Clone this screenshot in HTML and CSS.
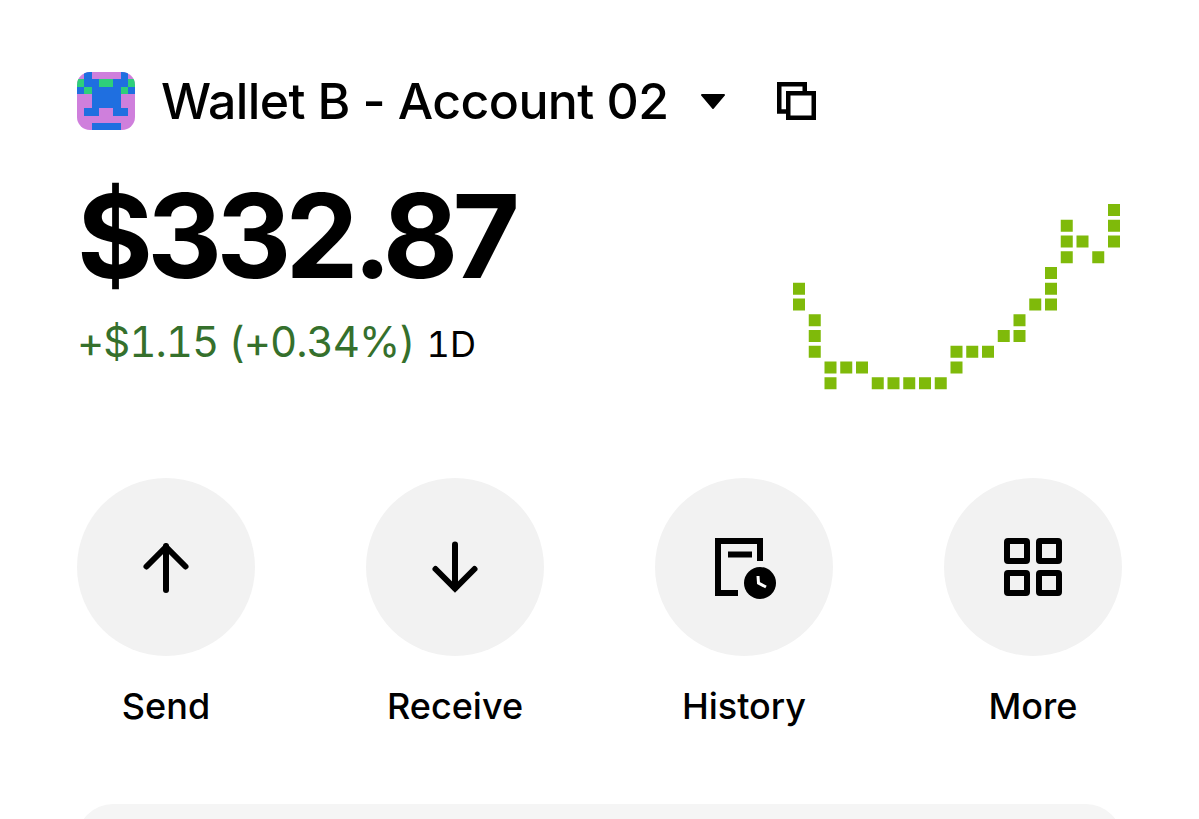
FILE: index.html
```html
<!DOCTYPE html>
<html lang="en">
<head>
    <meta charset="UTF-8">
    <meta name="viewport" content="width=device-width, initial-scale=1.0">
    <title>Wallet</title>
    <link rel="stylesheet" href="styles.css">
</head>
<body>
    <div class="container">
        <div class="account">
            <svg class="avatar" viewBox="0 0 8 8" shape-rendering="crispEdges">
                <rect width="8" height="8" fill="#cf7fdc"/>
                <path fill="#1f6fe0" d="M1 0h1v1H1zM6 0h1v1H6zM1 1h2v1H1zM5 1h2v1H5zM0 2h1v1H0zM2 2h4v3H2zM7 2h1v1H7zM1 5h2v1H1zM5 5h2v1H5zM2 7h4v1H2z"/>
                <path fill="#2ecf7a" d="M0 1h1v1H0zM3 1h2v1H3zM7 1h1v1H7zM1 2h1v1H1zM6 2h1v1H6z"/>
            </svg>
            <span class="account-name">Wallet B - Account 02</span>
            <svg class="caret" viewBox="0 0 24 15">
                <path d="M1 0h22a1 1 0 0 1 .8 1.6L12.8 14.4a1 1 0 0 1-1.6 0L.2 1.6A1 1 0 0 1 1 0z"/>
            </svg>
            <svg class="copy" viewBox="0 0 39 38" fill="none" stroke="#000" stroke-width="4.5">
                <path d="M11 29.5H2.25V2.25H27.75V11"/>
                <rect x="11.25" y="11.25" width="25.5" height="24.5"/>
            </svg>
        </div>

        <div class="summary">
            <div>
                <div class="balance">$332.87</div>
                <div class="change"><span class="change-value">+$1.15 (+0.34%)</span> <span class="change-period">1D</span></div>
            </div>
            <svg class="chart" id="chart" viewBox="0 0 327 186"></svg>
        </div>

        <div class="actions">
            <div class="action">
                <div class="action-circle">
                    <svg viewBox="0 0 60 60" fill="none" stroke="#000" stroke-width="6">
                        <path d="M30 9V53" stroke-linecap="round"/>
                        <path d="M10.5 29.5L30 10L49.5 29.5" stroke-linecap="round"/>
                    </svg>
                </div>
                <span class="action-label">Send</span>
            </div>
            <div class="action">
                <div class="action-circle">
                    <svg viewBox="0 0 60 60" fill="none" stroke="#000" stroke-width="6">
                        <path d="M30 7.5V51" stroke-linecap="round"/>
                        <path d="M10.5 32L30 51.5L49.5 32" stroke-linecap="round"/>
                    </svg>
                </div>
                <span class="action-label">Receive</span>
            </div>
            <div class="action">
                <div class="action-circle">
                    <svg viewBox="0 0 60 60" fill="none" stroke="#000" stroke-width="6">
                        <path d="M24 56H4V4H46V24"/>
                        <path d="M14 17.5H38"/>
                        <circle cx="46" cy="46" r="16" fill="#000" stroke="none"/>
                        <path d="M44 39L44.5 46L52 50" stroke="#fff" stroke-width="3"/>
                    </svg>
                </div>
                <span class="action-label">History</span>
            </div>
            <div class="action">
                <div class="action-circle">
                    <svg viewBox="0 0 60 60" fill="none" stroke="#000" stroke-width="6">
                        <rect x="4" y="4" width="20" height="20" rx="1"/>
                        <rect x="36" y="4" width="20" height="20" rx="1"/>
                        <rect x="4" y="36" width="20" height="20" rx="1"/>
                        <rect x="36" y="36" width="20" height="20" rx="1"/>
                    </svg>
                </div>
                <span class="action-label">More</span>
            </div>
        </div>

        <div class="card"></div>
    </div>

    <script>
        // [column, row] of each square of the sparkline
        const points = [
            [0,5],[0,6],[1,7],[1,8],[1,9],[2,10],[2,11],[3,10],[4,10],
            [5,11],[6,11],[7,11],[8,11],[9,11],[10,9],[10,10],[11,9],[12,9],
            [13,8],[14,7],[14,8],[15,6],[16,4],[16,5],[16,6],[17,1],[17,2],[17,3],
            [18,2],[19,3],[20,0],[20,1],[20,2]
        ];
        const svgNS = 'http://www.w3.org/2000/svg';
        const chart = document.getElementById('chart');
        points.forEach(function (p) {
            const square = document.createElementNS(svgNS, 'rect');
            square.setAttribute('x', p[0] * 15.75);
            square.setAttribute('y', p[1] * 15.75);
            square.setAttribute('width', 12);
            square.setAttribute('height', 12);
            chart.appendChild(square);
        });
    </script>
</body>
</html>
```

FILE: styles.css
```css
body {
    margin: 0;
    background: #fff;
    color: #000;
    font-family: Inter, "Liberation Sans", sans-serif;
    overflow: hidden;
}
.container {
    height: 819px;
    box-sizing: border-box;
    padding: 71px 77px 0;
    overflow: hidden;
}
.account {
    display: flex;
    align-items: center;
    height: 59px;
}
.avatar {
    width: 58px;
    height: 58px;
    border-radius: 13px;
    margin-right: 26px;
}
.account-name {
    font-size: 50px;
    font-weight: 500;
    line-height: 59px;
    letter-spacing: -0.6px;
    margin-top: 2px;
}
.caret {
    width: 24px;
    height: 15px;
    margin-left: 33px;
    margin-top: 2px;
}
.copy {
    width: 39px;
    height: 38px;
    margin-left: 52px;
}
.summary {
    display: flex;
    justify-content: space-between;
    align-items: flex-start;
}
.balance {
    font-size: 116px;
    font-weight: 700;
    line-height: 130px;
    letter-spacing: -5.7px;
    margin-top: 41px;
}
.change {
    font-size: 42px;
    line-height: 50px;
    margin-top: 16px;
}
.change-value {
    color: #35702c;
    font-feature-settings: "tnum";
    letter-spacing: -1px;
}
.change-period {
    font-size: 36px;
    font-feature-settings: "tnum";
}
.chart {
    width: 327px;
    height: 186px;
    fill: #7fba0a;
    margin-top: 74px;
    margin-right: 2px;
}
.actions {
    display: flex;
    justify-content: space-between;
    margin-top: 88px;
}
.action {
    display: flex;
    flex-direction: column;
    align-items: center;
    width: 178px;
}
.action-circle {
    display: flex;
    align-items: center;
    justify-content: center;
    width: 178px;
    height: 178px;
    border-radius: 50%;
    background: #f2f2f2;
}
.action-circle svg {
    width: 60px;
    height: 60px;
    overflow: visible;
}
.action-label {
    font-size: 36px;
    font-weight: 500;
    line-height: 44px;
    margin-top: 28px;
}
.card {
    height: 120px;
    margin-top: 76px;
    border-radius: 36px;
    background: #f5f5f5;
}
```
